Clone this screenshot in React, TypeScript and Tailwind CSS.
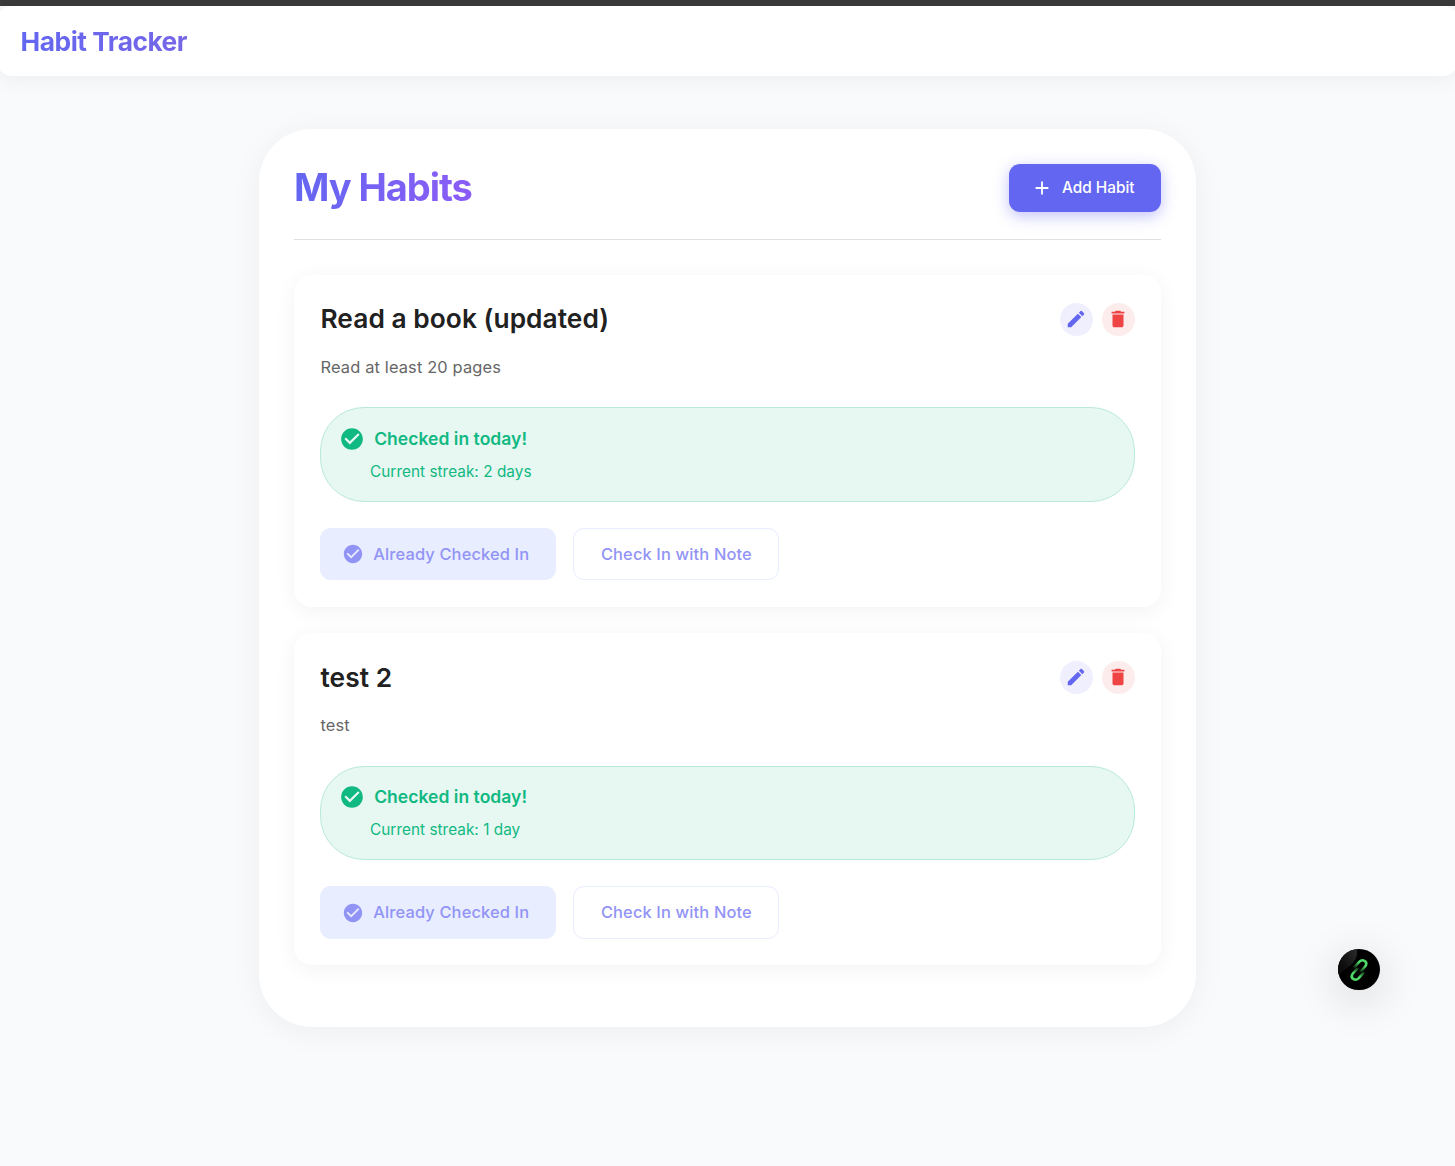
import { MdAdd, MdCheckCircle, MdDelete, MdEdit } from "react-icons/md";

type Habit = { name: string; description: string; streak: string };

const habits: Habit[] = [
  { name: "Read a book (updated)", description: "Read at least 20 pages", streak: "2 days" },
  { name: "test 2", description: "test", streak: "1 day" },
];

function HabitCard({ habit }: { habit: Habit }) {
  return (
    <article className="h-[332px] rounded-[18px] bg-white px-[26px] pt-[26px] shadow-[0_4px_22px_rgba(0,0,0,0.05)]">
      <div className="flex h-[37px] items-center justify-between">
        <h2 className="-mt-[1.2px] ml-[0.5px] text-[26.3px] leading-[37px] font-semibold tracking-[0.05px] text-[#212121]">{habit.name}</h2>
        <div className="flex gap-[9px]">
          <button aria-label="Edit" className="flex size-[33px] items-center justify-center rounded-full bg-[#f0effe] pr-px pb-px">
            <MdEdit className="size-[22px] text-[#6366f1]" />
          </button>
          <button aria-label="Delete" className="flex size-[33px] items-center justify-center rounded-full bg-[#fdecec] pr-px pb-px">
            <MdDelete className="size-[22px] text-[#ef4444]" />
          </button>
        </div>
      </div>
      <p className="mt-[16px] ml-[0.5px] h-[26px] text-[16.45px] leading-[26px] tracking-[0.13px] text-[#666]">{habit.description}</p>
      <div className="mt-[27.3px] h-[94.5px] rounded-[44px] border border-[#b9ead9] bg-[#e7f7f1] px-[18px] pt-[17.5px] text-[#10b981]">
        <div className="flex h-[26px] items-center">
          <MdCheckCircle className="size-[26px]" />
          <span className="ml-[9.2px] text-[17.5px] font-semibold tracking-[0.03px]">Checked in today!</span>
        </div>
        <p className="mt-[9px] ml-[31px] text-[15.35px] leading-[22px] tracking-[0.03px]">Current streak: {habit.streak}</p>
      </div>
      <div className="mt-[26.2px] flex gap-[17px]">
        <button className="flex h-[52.4px] w-[236px] items-center rounded-[11px] bg-[#e8edff] pl-[22px] text-[#9294f5]">
          <MdCheckCircle className="size-[22px]" />
          <span className="ml-[9.3px] text-[16.45px] font-medium tracking-[0.13px]">Already Checked In</span>
        </button>
        <button className="h-[52.4px] w-[206px] rounded-[11px] border border-[#e8edff] pl-[0.8px] text-[16.45px] font-medium tracking-[0.14px] text-[#9294f5]">
          Check In with Note
        </button>
      </div>
    </article>
  );
}

function ChainButton() {
  return (
    <button
      aria-label="Open link"
      className="fixed top-[949px] left-[1338px] h-[41px] w-[42px] rounded-full bg-black shadow-[0_9px_44px_rgba(0,0,0,0.17)]"
    >
      <svg viewBox="0 0 42 42" className="h-[41px] w-[42px]" preserveAspectRatio="none" fill="none">
        <defs>
          <linearGradient id="upper" x1="25" y1="11" x2="18" y2="21" gradientUnits="userSpaceOnUse">
            <stop offset="0.35" stopColor="#4ed968" />
            <stop offset="1" stopColor="#4ed968" stopOpacity="0.1" />
          </linearGradient>
          <linearGradient id="lower" x1="17" y1="31" x2="24" y2="21" gradientUnits="userSpaceOnUse">
            <stop offset="0.35" stopColor="#4ed968" />
            <stop offset="1" stopColor="#4ed968" stopOpacity="0.1" />
          </linearGradient>
          <linearGradient id="sheen" x1="2" y1="14" x2="18" y2="6" gradientUnits="userSpaceOnUse">
            <stop stopColor="#0c0c0c" />
            <stop offset="1" stopColor="#262626" />
          </linearGradient>
          <clipPath id="disc"><circle cx="21" cy="21" r="21" /></clipPath>
        </defs>
        <path d="M0 0H19C20 9 16 14 11 18C7 21 4 23 1 27H0Z" fill="url(#sheen)" clipPath="url(#disc)" />
        <path d="M16.5 18.5L21.5 13C24.5 10 29.5 12.5 28 16.5C27.5 18 26 19.5 22.5 23" stroke="url(#upper)" strokeWidth="2.6" strokeLinecap="round" />
        <path d="M25.5 24.5L20.5 30C17.5 33 12.5 30.5 14 26.5C14.5 25 16 23.5 19.5 20" stroke="url(#lower)" strokeWidth="2.6" strokeLinecap="round" />
      </svg>
    </button>
  );
}

export default function App() {
  return (
    <div className="min-h-[1166px] overflow-hidden bg-[#f8fafc] font-[Inter,sans-serif] antialiased">
      <div className="h-[6px] bg-[#3a3a3a]" />
      <header className="-mx-[5px] flex h-[70px] items-center rounded-[18px] bg-white px-[26px] shadow-[0_4px_22px_rgba(0,0,0,0.05)]">
        <div className="mt-[2px] -ml-[0.4px] w-full bg-gradient-to-r from-[#6366f1] to-[#ec4899] bg-clip-text text-[26.3px] leading-[36px] font-bold tracking-[-0.48px] text-transparent">
          Habit Tracker
        </div>
      </header>
      <main className="mx-auto mt-[53px] h-[898px] w-[937px] rounded-[53px] bg-white px-[35px] pt-[35px] shadow-[0_4px_32px_rgba(0,0,0,0.05)]">
        <div className="flex h-[76px] items-start justify-between border-b border-[#e0e0e0]">
          <h1 className="-mt-px bg-gradient-to-r from-[#6366f1] to-[#8b5cf6] bg-clip-text text-[38px] leading-[48px] font-bold tracking-[-1.05px] text-transparent">
            My Habits
          </h1>
          <button className="flex h-[48px] w-[152px] items-center rounded-[11px] bg-[#6366f1] pl-[22px] text-white shadow-[0_4px_15px_rgba(99,102,241,0.4)]">
            <MdAdd className="size-[22px]" />
            <span className="ml-[9px] text-[15.35px] font-medium">Add Habit</span>
          </button>
        </div>
        <div className="mt-[35px] flex flex-col gap-[26.4px]">
          {habits.map((habit) => <HabitCard key={habit.name} habit={habit} />)}
        </div>
      </main>
      <ChainButton />
    </div>
  );
}
